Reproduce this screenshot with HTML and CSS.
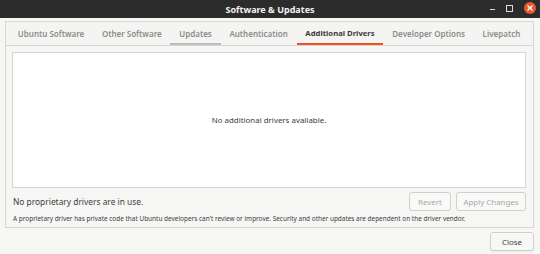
FILE: index.html
```html
<!DOCTYPE html>
<html lang="en">
<head>
    <meta charset="UTF-8">
    <title>Software &amp; Updates</title>
    <link rel="stylesheet" href="styles.css">
</head>
<body>
    <div class="window">
        <div class="titlebar">
            <span class="title">Software &amp; Updates</span>
            <div class="controls">
                <span class="ctl-min"></span>
                <span class="ctl-max"></span>
                <span class="ctl-close">
                    <svg width="8" height="8" viewBox="0 0 8 8"><path d="M1.5 1.5 L6.5 6.5 M6.5 1.5 L1.5 6.5" stroke="#fff" stroke-width="1.2"/></svg>
                </span>
            </div>
        </div>

        <div class="main">
            <div class="notebook">
                <div class="tabs">
                    <span class="tab">Ubuntu Software</span>
                    <span class="tab">Other Software</span>
                    <span class="tab focused">Updates</span>
                    <span class="tab">Authentication</span>
                    <span class="tab active">Additional Drivers</span>
                    <span class="tab">Developer Options</span>
                    <span class="tab">Livepatch</span>
                </div>
                <div class="page">
                    <div class="driver-list">No additional drivers available.</div>
                    <div class="status-row">
                        <span class="status">No proprietary drivers are in use.</span>
                        <div class="btns">
                            <button class="btn" disabled>Revert</button>
                            <button class="btn" disabled>Apply Changes</button>
                        </div>
                    </div>
                    <p class="note">A proprietary driver has private code that Ubuntu developers can't review or improve. Security and other updates are dependent on the driver vendor.</p>
                </div>
            </div>
            <div class="footer">
                <button class="btn close-btn">Close</button>
            </div>
        </div>
    </div>
</body>
</html>
```

FILE: styles.css
```css
body {
    margin: 0;
    font-family: "Noto Sans", "DejaVu Sans", sans-serif;
    background: #f6f6f5;
}
.window {
    width: 540px;
    height: 254px;
    display: flex;
    flex-direction: column;
}
.titlebar {
    height: 18px;
    background: #2c2c2c;
    display: flex;
    align-items: center;
    justify-content: center;
    position: relative;
}
.title {
    color: #f2f2f2;
    font-size: 9px;
    font-weight: bold;
}
.controls {
    position: absolute;
    right: 4px;
    top: 2px;
    display: flex;
    align-items: center;
    gap: 11px;
    height: 12px;
}
.ctl-min {
    width: 5px;
    height: 1px;
    margin-top: 3px;
    background: #ddd;
}
.ctl-max {
    width: 5px;
    height: 5px;
    border: 1px solid #ddd;
}
.ctl-close {
    width: 12px;
    height: 12px;
    border-radius: 50%;
    background: #e9572a;
    display: flex;
    align-items: center;
    justify-content: center;
}
.main {
    flex: 1;
    display: flex;
    flex-direction: column;
    padding: 3px 6px 2px 5px;
}
.notebook {
    border: 1px solid #d8d6d3;
    display: flex;
    flex-direction: column;
    height: 207px;
    box-sizing: border-box;
}
.tabs {
    height: 23px;
    border-bottom: 1px solid #d8d6d3;
    display: flex;
    align-items: stretch;
    padding-left: 3px;
    background: #f4f4f3;
}
.tab {
    font-size: 8px;
    font-weight: 600;
    color: #8c8c8c;
    padding: 0 8.8px;
    display: flex;
    align-items: center;
    margin-top: 1px;
    white-space: nowrap;
    border-bottom: 2px solid transparent;
}
.tab.focused {
    border-bottom-color: #bdbdbd;
}
.tab.active {
    font-size: 7.7px;
    color: #3d3d3d;
    font-weight: bold;
    border-bottom-color: #e95420;
}
.page {
    flex: 1;
    display: flex;
    flex-direction: column;
    padding: 6px 7px 0 6px;
}
.driver-list {
    height: 134px;
    background: #fff;
    border: 1px solid #d8d6d3;
    display: flex;
    align-items: center;
    justify-content: center;
    font-size: 7.9px;
    color: #3d3d3d;
}
.status-row {
    display: flex;
    align-items: center;
    justify-content: space-between;
    margin-top: 4px;
}
.status {
    font-size: 8.4px;
    color: #3d3d3d;
    padding-left: 1px;
}
.btns {
    display: flex;
    gap: 5px;
}
.btn {
    font-family: inherit;
    font-size: 7.9px;
    height: 19px;
    padding: 0;
    white-space: nowrap;
    background: #f6f6f5;
    border: 1px solid #d3d0cc;
    border-radius: 3px;
    color: #3d3d3d;
}
.btn:disabled {
    color: #a8a8a8;
    background: #f9f9f8;
}
.btns .btn:first-child {
    width: 42px;
}
.btns .btn:last-child {
    width: 70px;
}
.note {
    margin: 3px 0 0 1px;
    font-size: 6.45px;
    color: #3d3d3d;
    white-space: nowrap;
}
.footer {
    display: flex;
    justify-content: flex-end;
    margin-top: 4px;
}
.close-btn {
    width: 44px;
    height: 19px;
    background: #f7f7f6;
    box-shadow: 0 1px 1px rgba(0,0,0,0.06);
}
```
